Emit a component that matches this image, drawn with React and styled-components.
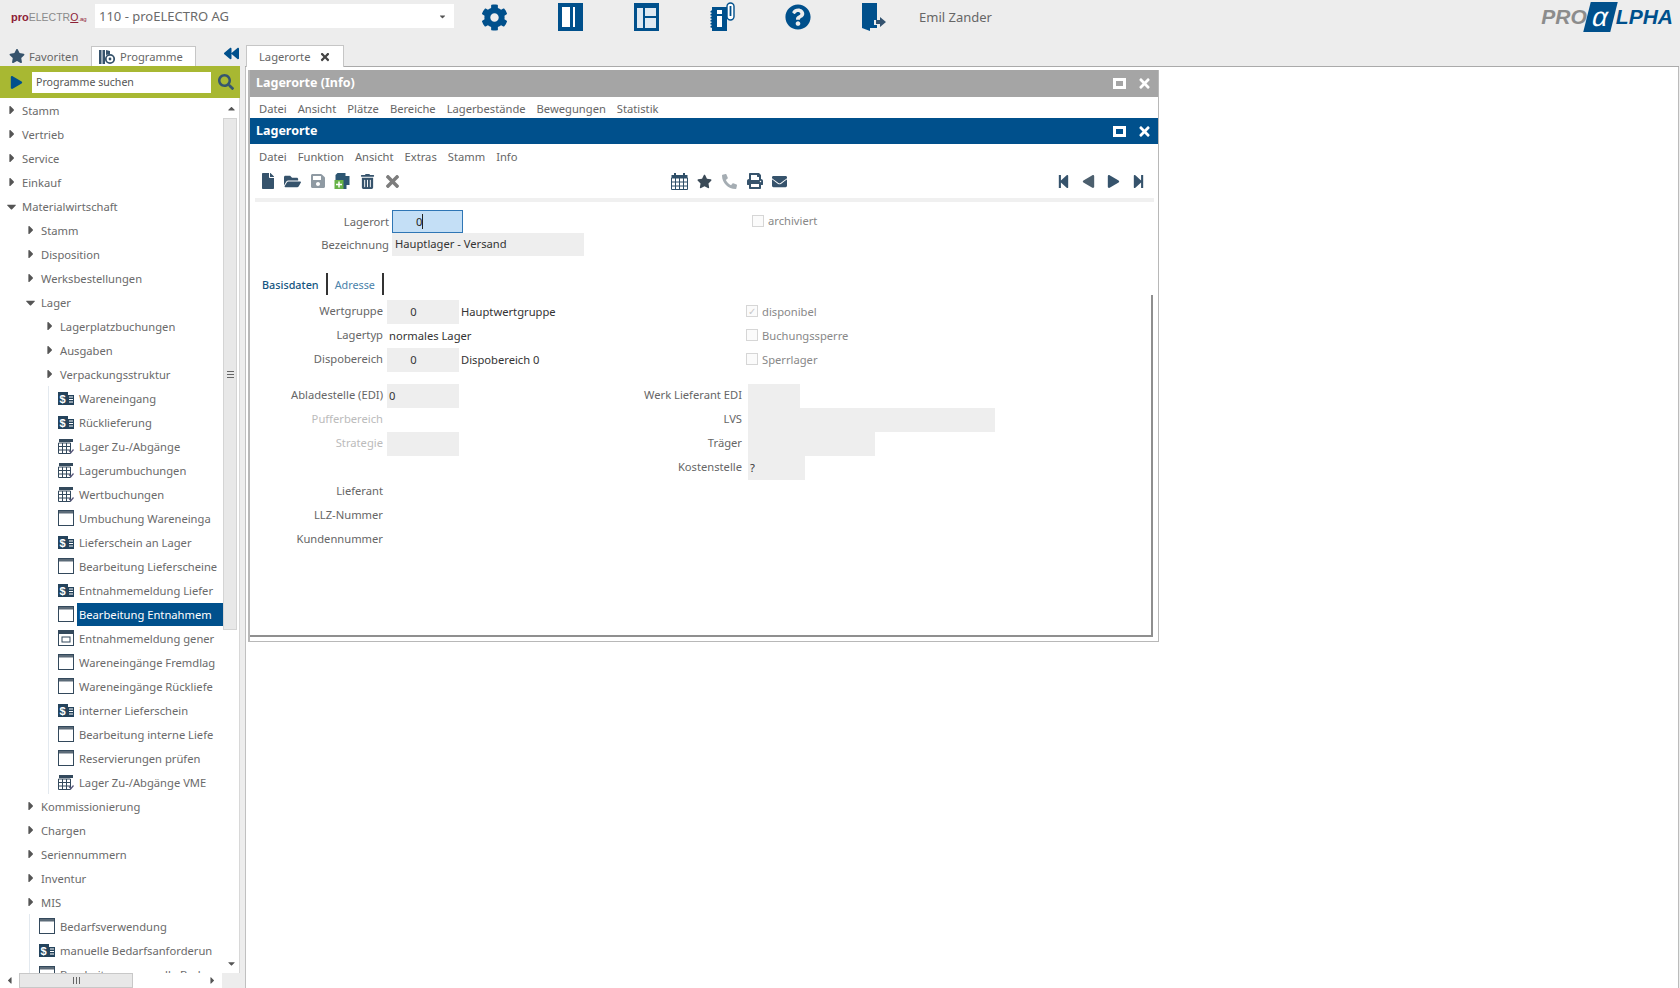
import React from "react";
import styled, { createGlobalStyle } from "styled-components";
import {
  FaCog, FaQuestionCircle, FaStar, FaSearch, FaTimes, FaFile, FaFolderOpen, FaSave, FaTrashAlt,
  FaPhone, FaPrint, FaEnvelope, FaStepBackward, FaStepForward, FaCaretRight,
  FaCaretLeft, FaCaretDown, FaCaretUp, FaBackward, FaPlay,
} from "react-icons/fa";

const BLUE = "#00508c";
const FONT = `"Noto Sans", "Open Sans", sans-serif`;
const TEXT = "11.2px";

const Global = createGlobalStyle`
  html, body { margin: 0; padding: 0; background: #fff; }
  body { font-family: ${FONT}; font-size: ${TEXT}; color: #666; }
`;

/* -------- little drawings -------- */

const PanelIcon = () => (
  <svg width="25" height="28" viewBox="0 0 25 28">
    <rect width="25" height="28" fill={BLUE} />
    <rect x="4" y="4" width="8" height="20" fill="#fff" />
    <rect x="15" y="4" width="2" height="20" fill="#fff" />
  </svg>
);

const LayoutIcon = () => (
  <svg width="25" height="28" viewBox="0 0 25 28">
    <rect width="25" height="28" fill={BLUE} />
    <rect x="3" y="5" width="6" height="20" fill="#dfe9f2" />
    <rect x="11" y="5" width="11" height="8" fill="#dfe9f2" />
    <rect x="11" y="15" width="11" height="10" fill="#dfe9f2" />
  </svg>
);

const BookInfoIcon = () => (
  <svg width="25" height="30" viewBox="0 0 25 30">
    <path d="M2 5h15v24H2v-3l-2-1 2-2-2-1 2-2-2-1 2-2-2-1 2-2-2-1 2-2-2-1 2-2z" fill={BLUE} />
    <rect x="7" y="8" width="5" height="4" fill="#fff" />
    <rect x="7" y="14" width="5" height="11" fill="#fff" />
    <rect x="17" y="1" width="7" height="17" rx="3.5" fill="#fff" stroke={BLUE} strokeWidth="1.4" />
    <rect x="19.6" y="4" width="1.8" height="10" fill={BLUE} />
  </svg>
);

const DoorIcon = () => (
  <svg width="27" height="30" viewBox="0 0 27 30">
    <path d="M1 1h15v17h-3v5h3v3H9v3l-8-3z" fill={BLUE} />
    <path d="M15 18h4v-3l6 5-6 5v-3h-4z" fill="#34536f" />
  </svg>
);

const ProgramIcon = () => (
  <svg width="16" height="16" viewBox="0 0 16 16">
    <rect x="0" y="1" width="2.5" height="14" fill="#36536c" />
    <rect x="3.5" y="1" width="2.5" height="14" fill="#36536c" />
    <circle cx="11" cy="10" r="4.2" fill="#fff" stroke="#36536c" strokeWidth="1.8" />
    <circle cx="11" cy="10" r="1.4" fill="#36536c" />
    <path d="M7 1l4 1v3l-4 1z" fill="#36536c" />
  </svg>
);

const AlphaDoc = () => (
  <svg width="17" height="18" viewBox="0 0 16 18">
    <path d="M3 1h8v3h4v9h-3v4H1V3z" fill="#2d5672" />
    <rect x="0" y="8" width="9" height="9" fill="#67b246" />
    <path d="M4.5 9.5v6M1.5 12.5h6" stroke="#fff" strokeWidth="1.5" />
  </svg>
);

const CalendarGrid = () => (
  <svg width="17" height="17" viewBox="0 0 17 17">
    <rect x="0.5" y="2" width="16" height="3" fill="#2f4f68" />
    <rect x="3" y="0" width="2" height="3" fill="#2f4f68" />
    <rect x="12" y="0" width="2" height="3" fill="#2f4f68" />
    <path d="M.5 5h16v11.5H.5zM.5 9h16M.5 13h16M4.5 5v11.5M8.5 5v11.5M12.5 5v11.5" fill="none" stroke="#2f4f68" />
  </svg>
);

const TreeCal = () => (
  <svg width="16" height="16" viewBox="0 0 16 16">
    <rect x="1" y="1" width="14" height="3" fill="#33495c" />
    <path d="M.5 5h12v10.5H.5zM.5 8.5h12M.5 12h12M4.5 5v10.5M8.5 5v10.5" fill="none" stroke="#33495c" />
    <path d="M11 12.5l2 2 2.5-3" fill="none" stroke="#557" strokeWidth="1.2" />
  </svg>
);

const TreeWin = () => (
  <svg width="16" height="16" viewBox="0 0 16 16">
    <rect x=".5" y=".5" width="15" height="15" fill="#fff" stroke="#33495c" />
    <rect x="1" y="1" width="14" height="2.5" fill="#5c6b78" />
  </svg>
);

const TreeGen = () => (
  <svg width="16" height="16" viewBox="0 0 16 16">
    <rect x=".5" y=".5" width="15" height="15" fill="#fff" stroke="#33495c" />
    <rect x="1" y="1" width="14" height="3" fill="#33495c" />
    <rect x="4" y="7" width="8" height="5" fill="#fff" stroke="#33495c" />
  </svg>
);

const TreeDollar = () => (
  <svg width="16" height="15" viewBox="0 0 16 15">
    <path d="M0 1h10l2 3h4v10H0z" fill="#24435c" />
    <path d="M10 1h3l3 3h-6z" fill="#fff" />
    <path d="M11 6h4M11 8.5h4M11 11h4" stroke="#fff" />
    <text x="1.5" y="12" fontFamily="Liberation Sans, sans-serif" fontWeight="700" fontSize="11" fill="#fff">$</text>
  </svg>
);

const TREE_ICONS = { dollar: TreeDollar, cal: TreeCal, win: TreeWin, gen: TreeGen };

/* -------- data -------- */

const tree = [
  { t: "Stamm", l: 0 }, { t: "Vertrieb", l: 0 }, { t: "Service", l: 0 }, { t: "Einkauf", l: 0 },
  { t: "Materialwirtschaft", l: 0, open: true },
  { t: "Stamm", l: 1 }, { t: "Disposition", l: 1 }, { t: "Werksbestellungen", l: 1 },
  { t: "Lager", l: 1, open: true },
  { t: "Lagerplatzbuchungen", l: 2 }, { t: "Ausgaben", l: 2 }, { t: "Verpackungsstruktur", l: 2 },
  { t: "Wareneingang", l: 3, icon: "dollar" },
  { t: "Rücklieferung", l: 3, icon: "dollar" },
  { t: "Lager Zu-/Abgänge", l: 3, icon: "cal" },
  { t: "Lagerumbuchungen", l: 3, icon: "cal" },
  { t: "Wertbuchungen", l: 3, icon: "cal" },
  { t: "Umbuchung Wareneinga", l: 3, icon: "win" },
  { t: "Lieferschein an Lager", l: 3, icon: "dollar" },
  { t: "Bearbeitung Lieferscheine", l: 3, icon: "win" },
  { t: "Entnahmemeldung Liefer", l: 3, icon: "dollar" },
  { t: "Bearbeitung Entnahmem", l: 3, icon: "win", selected: true },
  { t: "Entnahmemeldung gener", l: 3, icon: "gen" },
  { t: "Wareneingänge Fremdlag", l: 3, icon: "win" },
  { t: "Wareneingänge Rückliefe", l: 3, icon: "win" },
  { t: "interner Lieferschein", l: 3, icon: "dollar" },
  { t: "Bearbeitung interne Liefe", l: 3, icon: "win" },
  { t: "Reservierungen prüfen", l: 3, icon: "win" },
  { t: "Lager Zu-/Abgänge VME", l: 3, icon: "cal" },
  { t: "Kommissionierung", l: 1 }, { t: "Chargen", l: 1 }, { t: "Seriennummern", l: 1 },
  { t: "Inventur", l: 1 }, { t: "MIS", l: 1 },
  { t: "Bedarfsverwendung", l: 2, icon: "win" },
  { t: "manuelle Bedarfsanforderun", l: 2, icon: "dollar" },
  { t: "Bearbeitung manuelle Bed", l: 2, icon: "win" },
];

const infoMenu = ["Datei", "Ansicht", "Plätze", "Bereiche", "Lagerbestände", "Bewegungen", "Statistik"];
const mainMenu = ["Datei", "Funktion", "Ansicht", "Extras", "Stamm", "Info"];

/* -------- shell -------- */

const Page = styled.div`
  width: 1680px;
  height: 988px;
  overflow: hidden;
  background: #ededed;
  display: flex;
  flex-direction: column;
`;

const Header = styled.header`
  height: 40px;
  flex: none;
  display: flex;
  align-items: flex-start;
  padding-left: 11px;
`;

const HeaderInner = styled.div`
  height: 34px;
  display: flex;
  align-items: center;
  flex: 1;
`;

const CompanyLogo = styled.div`
  width: 84px;
  font-family: "Liberation Sans", sans-serif;
  font-size: 10.5px;
  color: #8a8a8a;
  white-space: nowrap;
  b { color: #8d2136; font-size: 11px; }
  u { color: #8d2136; }
  small { font-size: 6px; color: #8d2136; }
`;

const CompanySelect = styled.div`
  width: 359px;
  height: 24px;
  background: #fff;
  display: flex;
  align-items: center;
  justify-content: space-between;
  padding: 0 4px;
  box-sizing: border-box;
  font-size: 13px;
  color: #6a6a6a;
  margin-top: -2px;
  svg { color: #555; margin-right: 3px; }
`;

const HeaderIcons = styled.div`
  display: flex;
  margin-left: 2px;
`;

const HeaderIcon = styled.div`
  width: 76px;
  height: 34px;
  display: flex;
  align-items: center;
  justify-content: center;
  color: ${BLUE};
`;

const UserName = styled.div`
  margin-left: 7px;
  font-size: 13px;
  color: #666;
`;

const Brand = styled.div`
  margin-left: auto;
  margin-right: 7px;
  display: flex;
  align-items: center;
  font-family: "Liberation Sans", sans-serif;
  font-style: italic;
  font-weight: 700;
  font-size: 21px;
  color: #8c8c8c;
`;

const BrandAlpha = styled.span`
  width: 27px;
  height: 30px;
  margin: 0 2px 0 0;
  background: ${BLUE};
  color: #fff;
  transform: skewX(-14deg);
  display: flex;
  align-items: center;
  justify-content: center;
  font-style: normal;
  font-weight: 400;
  font-size: 27px;
`;

const BrandTail = styled.span`
  color: ${BLUE};
`;

const Body = styled.div`
  flex: 1;
  min-height: 0;
  display: flex;
`;

/* -------- side panel -------- */

const Side = styled.aside`
  width: 240px;
  flex: none;
  display: flex;
  flex-direction: column;
`;

const SideTabs = styled.div`
  height: 26px;
  flex: none;
  display: flex;
  align-items: flex-end;
  padding-left: 9px;
`;

const SideTab = styled.div`
  height: 20px;
  display: flex;
  align-items: center;
  gap: 4px;
  color: #666;
  svg { color: #36536c; flex: none; }
  ${p => p.$active
    ? `background:#fff;border:1px solid #c6c6c6;border-bottom:0;padding:0 12px 0 7px;margin-left:10px;box-sizing:content-box;height:19px;gap:5px;`
    : `width:72px;`}
`;

const Collapse = styled.div`
  margin-left: auto;
  margin-right: 1px;
  height: 26px;
  display: flex;
  align-items: center;
  color: ${BLUE};
  margin-top: 3px;
`;

const SearchBar = styled.div`
  height: 32px;
  flex: none;
  background: #a8b832;
  display: flex;
  align-items: center;
  padding: 0 6px 0 10px;
  box-sizing: border-box;
  svg { flex: none; }
`;

const SearchInput = styled.div`
  width: 180px;
  height: 21px;
  margin-left: 9px;
  background: #fff;
  font-size: 10.6px;
  line-height: 21px;
  padding-left: 4px;
  box-sizing: border-box;
  color: #555;
`;

const SearchButton = styled.div`
  margin-left: 7px;
  display: flex;
  color: #35566f;
`;

const TreeArea = styled.div`
  flex: 1;
  min-height: 0;
  display: flex;
  background: #fff;
`;

const Tree = styled.div`
  width: 223px;
  flex: none;
  overflow: hidden;
`;

const Row = styled.div`
  height: 24px;
  display: flex;
  align-items: center;
  color: #6a6a6a;
  white-space: nowrap;
  padding-left: ${p => (p.$leaf ? p.$level * 19 + 1 : p.$level * 19 + 5)}px;
  background: ${p => (p.$leaf
    ? `linear-gradient(#e3e9ef, #e3e9ef) no-repeat ${(p.$level - 1) * 19 + 10}px 0 / 1px 100%`
    : "none")};
`;

const Arrow = styled.span`
  width: 15px;
  flex: none;
  display: flex;
  color: #555;
  margin-left: ${p => (p.$open ? "-1px" : "0")};
  margin-right: ${p => (p.$open ? "1px" : "0")};
`;

const RowIcon = styled.span`
  width: 16px;
  flex: none;
  display: flex;
  margin-right: 3px;
`;

const RowLabel = styled.span`
  flex: 1;
  height: 23px;
  line-height: 23px;
  padding-left: 2px;
  background: ${p => (p.$selected ? BLUE : "transparent")};
  color: ${p => (p.$selected ? "#fff" : "inherit")};
`;

const VScroll = styled.div`
  width: 17px;
  flex: none;
  display: flex;
  flex-direction: column;
  background: #fff;
  border-right: 1px solid #d8d8d8;
  box-sizing: border-box;
`;

const ScrollEnd = styled.div`
  height: 20px;
  flex: none;
  display: flex;
  align-items: center;
  justify-content: center;
  color: #555;
  margin-top: ${p => (p.$bottom ? "auto" : "0")};
`;

const VThumb = styled.div`
  width: 14px;
  height: 512px;
  background: #e8e8e8;
  border: 1px solid #d4d4d4;
  box-sizing: border-box;
  display: flex;
  align-items: center;
  justify-content: center;
`;

const GripV = styled.span`
  display: block;
  width: 7px;
  height: 7px;
  background: repeating-linear-gradient(#666 0 1px, transparent 1px 3px);
`;

const HScroll = styled.div`
  height: 15px;
  flex: none;
  background: #fff;
  display: flex;
  align-items: center;
  width: 222px;
  color: #555;
`;

const HArrow = styled.span`
  width: 19px;
  display: flex;
  justify-content: center;
`;

const HThumb = styled.div`
  width: 114px;
  height: 15px;
  background: #e8e8e8;
  border: 1px solid #c8c8c8;
  box-sizing: border-box;
  display: flex;
  align-items: center;
  justify-content: center;
  margin-right: 70px;
`;

const GripH = styled.span`
  display: block;
  width: 7px;
  height: 7px;
  background: repeating-linear-gradient(90deg, #666 0 1px, transparent 1px 3px);
`;

/* -------- main area -------- */

const Main = styled.main`
  flex: 1;
  min-width: 0;
  margin-left: 5px;
  margin-right: 1px;
  display: flex;
  flex-direction: column;
`;

const MainTabs = styled.div`
  height: 27px;
  flex: none;
  display: flex;
  align-items: flex-end;
  padding-left: 1px;
  border-bottom: 1px solid #aaa;
  box-sizing: border-box;
`;

const MainTab = styled.div`
  width: 98px;
  height: 22px;
  background: #fff;
  border: 1px solid #c6c6c6;
  border-bottom: 0;
  margin-bottom: -1px;
  box-sizing: border-box;
  display: flex;
  align-items: center;
  gap: 9px;
  padding-left: 12px;
  color: #666;
  svg { color: #444; }
`;

const Content = styled.div`
  flex: 1;
  background: #fff;
  border-left: 1px solid #c0c0c0;
  border-right: 1px solid #bbb;
  padding: 3px 0 0 2px;
`;

const Window = styled.section`
  width: 911px;
  height: 572px;
  box-sizing: border-box;
  background: #fff;
  border-left: 2px solid #b8b8b8;
  border-right: 1px solid #b8b8b8;
  border-bottom: 1px solid #b8b8b8;
`;

const TitleBar = styled.div`
  height: ${p => (p.$info ? 27 : 26)}px;
  background: ${p => (p.$info ? "#a5a5a5" : BLUE)};
  color: #fff;
  font-weight: 700;
  font-size: 12.5px;
  display: flex;
  align-items: center;
  padding: 0 6px 2px 6px;
  box-sizing: border-box;
`;

const TitleActions = styled.div`
  margin-left: auto;
  display: flex;
  align-items: center;
  gap: 11px;
  color: #fff;
  margin-top: 2px;
`;

const MaxBox = styled.span`
  width: 13px;
  height: 11px;
  box-sizing: border-box;
  border: 3px solid #fff;
`;

const Menu = styled.nav`
  height: ${p => p.$h}px;
  box-sizing: border-box;
  padding-top: ${p => p.$pt || 0}px;
  display: flex;
  align-items: center;
  gap: 11px;
  padding-left: 9px;
  color: #666;
`;

const Toolbar = styled.div`
  height: 34px;
  box-sizing: border-box;
  margin-left: 5px;
  margin-right: 4px;
  display: flex;
  align-items: center;
  border-bottom: 4px solid #f0f0f0;
  padding-bottom: 4px;
`;

const ToolGroup = styled.div`
  display: flex;
  align-items: center;
  margin-left: ${p => p.$ml || 0}px;
`;

const Tool = styled.span`
  width: 25px;
  height: 20px;
  display: flex;
  align-items: center;
  justify-content: center;
  color: ${p => p.$c || "#36536c"};
  svg { transform: ${p => (p.$flip ? "scaleX(-1)" : "none")}; }
`;

const Head = styled.div`
  padding-top: 8px;
`;

const HeadRow = styled.div`
  height: 23px;
  display: flex;
  align-items: center;
`;

const HeadLabel = styled.div`
  width: 139px;
  text-align: right;
  color: #666;
  margin-right: 3px;
`;

const FocusField = styled.div`
  width: 71px;
  height: 23px;
  box-sizing: border-box;
  background: #c4dff6;
  border: 1px solid #2f76b5;
  line-height: 21px;
  color: #222;
  padding-left: 23px;
  span { border-right: 1px solid #222; }
`;

const Field = styled.div`
  width: ${p => p.$w}px;
  height: ${p => p.$h || 24}px;
  flex: none;
  box-sizing: border-box;
  background: #eee;
  display: flex;
  align-items: center;
  justify-content: ${p => (p.$center ? "center" : "flex-start")};
  padding: 0 ${p => (p.$center ? 19 : 0)}px 2px ${p => (p.$center ? 0 : p.$pad ?? 2)}px;
  color: #333;
`;

const Check = styled.span`
  width: 12px;
  height: 12px;
  flex: none;
  box-sizing: border-box;
  border: 1px solid #d6d6d6;
  background: #fbfbfb;
  margin-right: 4px;
  display: flex;
  align-items: center;
  justify-content: center;
  color: #c8c8c8;
  font-size: 10px;
  line-height: 1;
`;

const CheckText = styled.div`
  display: flex;
  align-items: center;
  color: #888;
  margin-left: ${p => p.$ml}px;
  padding-bottom: 2px;
`;

const Tabs = styled.div`
  height: 22px;
  margin-top: 17px;
  padding-left: 12px;
  display: flex;
  align-items: stretch;
`;

const PanelTab = styled.div`
  display: flex;
  align-items: center;
  padding-right: 7px;
  margin-right: 7px;
  border-right: 2px solid #333;
  font-size: 10.8px;
  font-weight: ${p => (p.$active ? 500 : 400)};
  color: ${p => (p.$active ? "#14557f" : "#4a82aa")};
`;

const TabPanel = styled.div`
  width: 903px;
  height: 342px;
  box-sizing: border-box;
  border-right: 2px solid #8f8f8f;
  border-bottom: 2px solid #8f8f8f;
  padding-top: 5px;
  display: flex;
`;

const Column = styled.div`
  width: ${p => p.$w}px;
  flex: none;
`;

const FormRow = styled.div`
  height: 24px;
  display: flex;
  align-items: center;
  margin-bottom: ${p => (p.$gap ? 12 : 0)}px;
`;

const FormLabel = styled.div`
  width: ${p => p.$w}px;
  flex: none;
  text-align: right;
  color: ${p => (p.$muted ? "#bbb" : "#666")};
  margin-right: ${p => p.$mr}px;
  padding-bottom: 3px;
  white-space: nowrap;
`;

const Plain = styled.span`
  color: #333;
  margin-left: ${p => p.$ml}px;
  padding-bottom: 2px;
`;

function TreeRow({ item }) {
  const Icon = item.icon && TREE_ICONS[item.icon];
  return (
    <Row $level={item.l} $leaf={!!Icon}>
      {Icon ? (
        <RowIcon><Icon /></RowIcon>
      ) : (
        <Arrow $open={item.open}>
          {item.open ? <FaCaretDown size={15} /> : <FaCaretRight size={14} />}
        </Arrow>
      )}
      <RowLabel $selected={item.selected}>{item.t}</RowLabel>
    </Row>
  );
}

function LeftRow({ label, muted, gap, children }) {
  return (
    <FormRow $gap={gap}>
      <FormLabel $w={133} $mr={4} $muted={muted}>{label}</FormLabel>
      {children}
    </FormRow>
  );
}

function RightRow({ label, gap, children }) {
  return (
    <FormRow $gap={gap}>
      <FormLabel $w={112} $mr={6}>{label}</FormLabel>
      {children}
    </FormRow>
  );
}

function WindowActions() {
  return (
    <TitleActions>
      <MaxBox />
      <FaTimes size={15} />
    </TitleActions>
  );
}

export default function App() {
  return (
    <Page>
      <Global />
      <Header>
        <HeaderInner>
          <CompanyLogo><b>pro</b>ELECTR<u>O</u><small>.ag</small></CompanyLogo>
          <CompanySelect>
            110 - proELECTRO AG
            <FaCaretDown size={9} />
          </CompanySelect>
          <HeaderIcons>
            <HeaderIcon><FaCog size={27} /></HeaderIcon>
            <HeaderIcon><PanelIcon /></HeaderIcon>
            <HeaderIcon><LayoutIcon /></HeaderIcon>
            <HeaderIcon><BookInfoIcon /></HeaderIcon>
            <HeaderIcon><FaQuestionCircle size={26} /></HeaderIcon>
            <HeaderIcon><DoorIcon /></HeaderIcon>
          </HeaderIcons>
          <UserName>Emil Zander</UserName>
          <Brand>PRO<BrandAlpha>α</BrandAlpha><BrandTail>LPHA</BrandTail></Brand>
        </HeaderInner>
      </Header>

      <Body>
        <Side>
          <SideTabs>
            <SideTab><FaStar size={16} />Favoriten</SideTab>
            <SideTab $active><ProgramIcon />Programme</SideTab>
            <Collapse><FaBackward size={15} /></Collapse>
          </SideTabs>
          <SearchBar>
            <FaPlay size={13} color={BLUE} />
            <SearchInput>Programme suchen</SearchInput>
            <SearchButton><FaSearch size={16} /></SearchButton>
          </SearchBar>
          <TreeArea>
            <Tree>
              {tree.map((item, i) => <TreeRow key={i} item={item} />)}
            </Tree>
            <VScroll>
              <ScrollEnd><FaCaretUp size={11} /></ScrollEnd>
              <VThumb><GripV /></VThumb>
              <ScrollEnd $bottom><FaCaretDown size={11} /></ScrollEnd>
            </VScroll>
          </TreeArea>
          <HScroll>
            <HArrow><FaCaretLeft size={11} /></HArrow>
            <HThumb><GripH /></HThumb>
            <HArrow><FaCaretRight size={11} /></HArrow>
          </HScroll>
        </Side>

        <Main>
          <MainTabs>
            <MainTab>Lagerorte <FaTimes size={12} /></MainTab>
          </MainTabs>
          <Content>
            <Window>
              <TitleBar $info>
                Lagerorte (Info)
                <WindowActions />
              </TitleBar>
              <Menu $h={21} $pt={2}>{infoMenu.map(m => <span key={m}>{m}</span>)}</Menu>
              <TitleBar>
                Lagerorte
                <WindowActions />
              </TitleBar>
              <Menu $h={24}>{mainMenu.map(m => <span key={m}>{m}</span>)}</Menu>
              <Toolbar>
                <ToolGroup>
                  <Tool><FaFile size={16} /></Tool>
                  <Tool><FaFolderOpen size={17} /></Tool>
                  <Tool $c="#8f9aa3"><FaSave size={16} /></Tool>
                  <Tool><AlphaDoc /></Tool>
                  <Tool><FaTrashAlt size={15} /></Tool>
                  <Tool $c="#7d7d7d"><FaTimes size={19} /></Tool>
                </ToolGroup>
                <ToolGroup $ml={262}>
                  <Tool><CalendarGrid /></Tool>
                  <Tool $c="#3b4a57"><FaStar size={15} /></Tool>
                  <Tool $c="#a5adb3" $flip><FaPhone size={15} /></Tool>
                  <Tool><FaPrint size={16} /></Tool>
                  <Tool><FaEnvelope size={15} /></Tool>
                </ToolGroup>
                <ToolGroup $ml={259}>
                  <Tool><FaStepBackward size={15} /></Tool>
                  <Tool $c="#4c5f6e" $flip><FaPlay size={13} /></Tool>
                  <Tool><FaPlay size={13} /></Tool>
                  <Tool><FaStepForward size={15} /></Tool>
                </ToolGroup>
              </Toolbar>

              <Head>
                <HeadRow>
                  <HeadLabel>Lagerort</HeadLabel>
                  <FocusField><span>0</span></FocusField>
                  <CheckText $ml={289}><Check />archiviert</CheckText>
                </HeadRow>
                <HeadRow>
                  <HeadLabel>Bezeichnung</HeadLabel>
                  <Field $w={192} $h={23} $pad={3}>Hauptlager - Versand</Field>
                </HeadRow>
              </Head>

              <Tabs>
                <PanelTab $active>Basisdaten</PanelTab>
                <PanelTab>Adresse</PanelTab>
              </Tabs>

              <TabPanel>
                <Column $w={380}>
                  <LeftRow label="Wertgruppe">
                    <Field $w={72} $center>0</Field><Plain $ml={2}>Hauptwertgruppe</Plain>
                  </LeftRow>
                  <LeftRow label="Lagertyp"><Plain $ml={2}>normales Lager</Plain></LeftRow>
                  <LeftRow label="Dispobereich" gap>
                    <Field $w={72} $center>0</Field><Plain $ml={2}>Dispobereich 0</Plain>
                  </LeftRow>
                  <LeftRow label="Abladestelle (EDI)"><Field $w={72}>0</Field></LeftRow>
                  <LeftRow label="Pufferbereich" muted />
                  <LeftRow label="Strategie" muted><Field $w={72} /></LeftRow>
                  <LeftRow />
                  <LeftRow label="Lieferant" />
                  <LeftRow label="LLZ-Nummer" />
                  <LeftRow label="Kundennummer" />
                </Column>
                <Column $w={500}>
                  <RightRow><CheckText $ml={-2}><Check>✓</Check>disponibel</CheckText></RightRow>
                  <RightRow><CheckText $ml={-2}><Check />Buchungssperre</CheckText></RightRow>
                  <RightRow gap><CheckText $ml={-2}><Check />Sperrlager</CheckText></RightRow>
                  <RightRow label="Werk Lieferant EDI"><Field $w={52} /></RightRow>
                  <RightRow label="LVS"><Field $w={247} /></RightRow>
                  <RightRow label="Träger"><Field $w={127} /></RightRow>
                  <RightRow label="Kostenstelle"><Field $w={57}>?</Field></RightRow>
                </Column>
              </TabPanel>
            </Window>
          </Content>
        </Main>
      </Body>
    </Page>
  );
}
